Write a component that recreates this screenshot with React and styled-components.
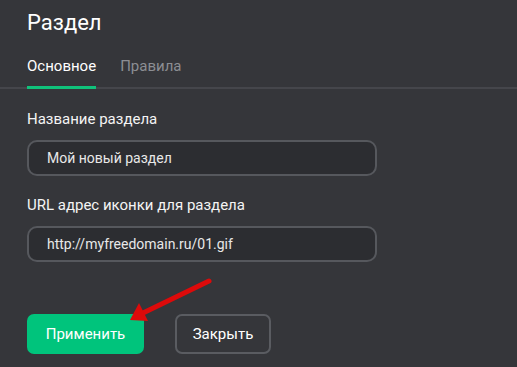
import React from "react";
import styled, { createGlobalStyle } from "styled-components";

const Global = createGlobalStyle`
  html, body { margin: 0; padding: 0; background: #35363a; }
  body { font-family: Roboto, "Noto Sans", sans-serif; color: #f2f2f2; }
  * { box-sizing: border-box; }
`;

const Page = styled.div`
  position: relative;
  width: 517px;
  height: 367px;
  overflow: hidden;
  background: #35363a;
`;

const Header = styled.div`
  padding: 6px 27px 0;
`;

const Title = styled.h1`
  margin: 0;
  font-size: 22px;
  font-weight: 400;
  line-height: 33px;
  color: #ffffff;
`;

const Tabs = styled.div`
  display: flex;
  gap: 24px;
  padding: 0 27px;
  margin-top: 17px;
  border-bottom: 2px solid #45464b;
`;

const Tab = styled.div`
  font-size: 15px;
  line-height: 20px;
  padding-bottom: 10px;
  margin-bottom: -2px;
  color: ${(p) => (p.$active ? "#ffffff" : "#8c8e93")};
  border-bottom: 3px solid ${(p) => (p.$active ? "#10c27b" : "transparent")};
`;

const Body = styled.div`
  display: flex;
  flex-direction: column;
  padding: 20px 27px 0;
`;

const Field = styled.div`
  display: flex;
  flex-direction: column;
  gap: 11px;
  margin-bottom: 19px;
`;

const Label = styled.label`
  font-size: 15px;
  line-height: 20px;
  color: #f4f4f4;
`;

const Input = styled.div`
  width: 350px;
  height: 36px;
  border: 2px solid #56585d;
  border-radius: 10px;
  background: #2c2d31;
  padding: 0 18px;
  display: flex;
  align-items: center;
  font-size: 14px;
  color: #e8e8e8;
`;

const Actions = styled.div`
  display: flex;
  gap: 31px;
  margin-top: 33px;
`;

const Button = styled.button`
  height: 40px;
  padding: 0;
  border-radius: 7px;
  font-family: inherit;
  font-size: 15px;
  color: #ffffff;
  background: ${(p) => (p.$primary ? "#00c47c" : "transparent")};
  border: 2px solid ${(p) => (p.$primary ? "#00c47c" : "#5a5c61")};
  width: ${(p) => p.$w}px;
  cursor: pointer;
`;

const Arrow = styled.svg`
  position: absolute;
  left: 125px;
  top: 275px;
  width: 95px;
  height: 55px;
`;

export default function App() {
  return (
    <Page>
      <Global />
      <Header>
        <Title>Раздел</Title>
      </Header>
      <Tabs>
        <Tab $active>Основное</Tab>
        <Tab>Правила</Tab>
      </Tabs>
      <Body>
        <Field>
          <Label>Название раздела</Label>
          <Input>Мой новый раздел</Input>
        </Field>
        <Field>
          <Label>URL адрес иконки для раздела</Label>
          <Input>http://myfreedomain.ru/01.gif</Input>
        </Field>
        <Actions>
          <Button $primary $w={117}>Применить</Button>
          <Button $w={96}>Закрыть</Button>
        </Actions>
      </Body>
      <Arrow viewBox="125 275 95 55">
        <line x1="209" y1="281" x2="143" y2="313" stroke="#dd0a0a" strokeWidth="5" strokeLinecap="round" />
        <polygon points="130,320 139,303 148,321" fill="#dd0a0a" />
      </Arrow>
    </Page>
  );
}
